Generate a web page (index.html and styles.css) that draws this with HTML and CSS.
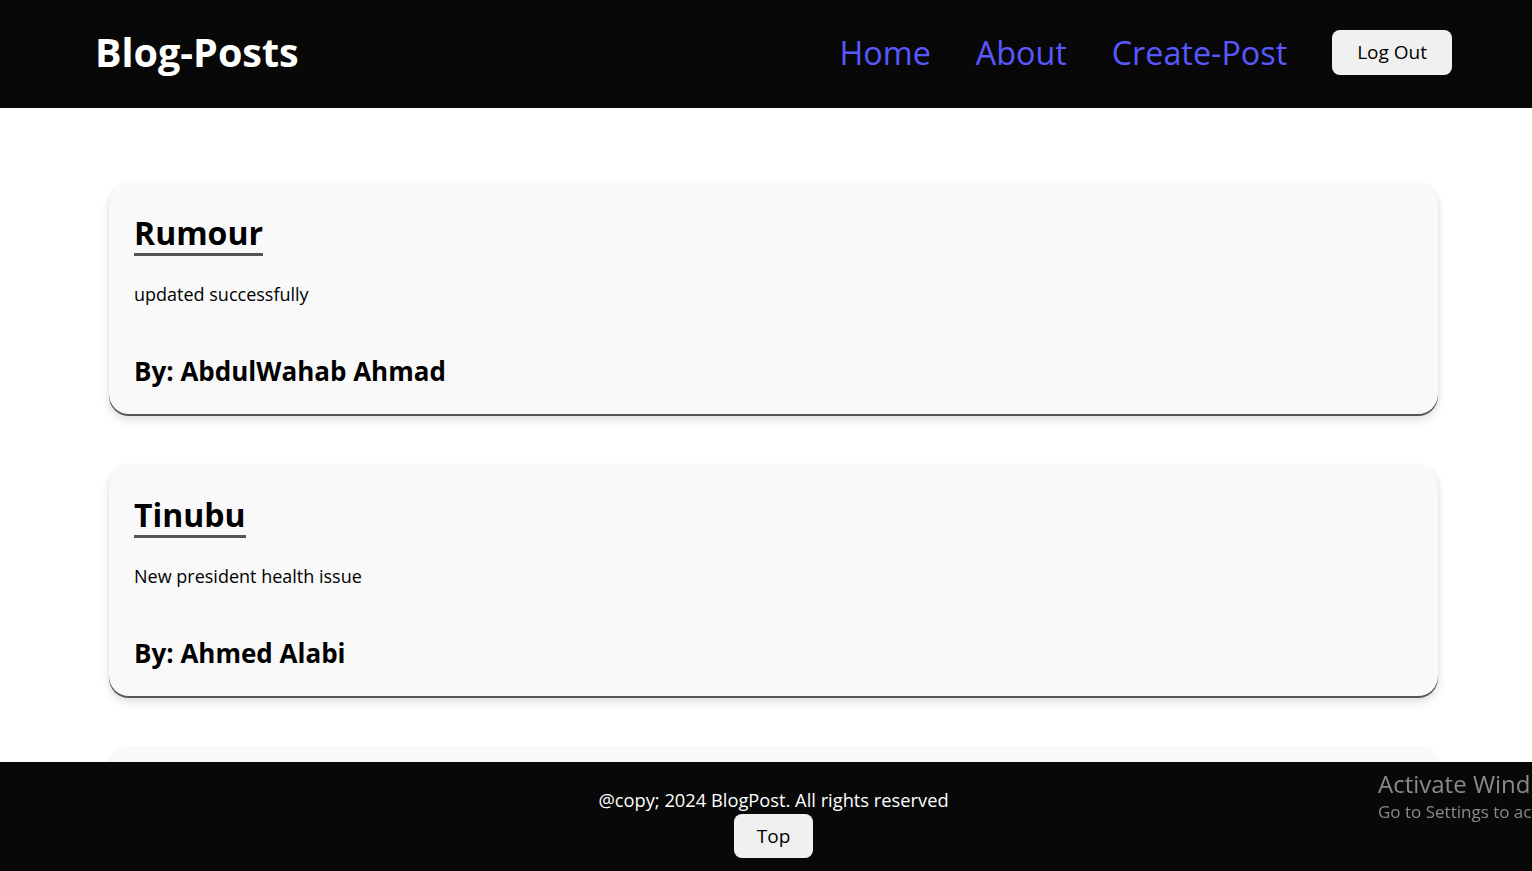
FILE: index.html
```html
<!DOCTYPE html>
<html lang="en">
<head>
<meta charset="utf-8">
<title>Blog-Posts</title>
<link rel="stylesheet" href="styles.css">
</head>
<body>
<header class="topbar">
  <h1 class="brand">Blog-Posts</h1>
  <nav class="nav">
    <a class="nav-link" href="#">Home</a>
    <a class="nav-link" href="#">About</a>
    <a class="nav-link" href="#">Create-Post</a>
    <button class="btn">Log Out</button>
  </nav>
</header>
<main class="posts">
  <article class="card">
    <h2 class="card-title">Rumour</h2>
    <p class="card-body">updated successfully</p>
    <h3 class="card-author">By: AbdulWahab Ahmad</h3>
  </article>
  <article class="card">
    <h2 class="card-title">Tinubu</h2>
    <p class="card-body">New president health issue</p>
    <h3 class="card-author">By: Ahmed Alabi</h3>
  </article>
  <article class="card">
    <h2 class="card-title">Post</h2>
    <p class="card-body">Another post</p>
    <h3 class="card-author">By: Author</h3>
  </article>
</main>
<footer class="footer">
  <p class="copy">@copy; 2024 BlogPost. All rights reserved</p>
  <button class="btn btn-top">Top</button>
</footer>
<div class="watermark">
  <div class="wm-title">Activate Windows</div>
  <div class="wm-sub">Go to Settings to activate Windows.</div>
</div>
</body>
</html>
```

FILE: styles.css
```css
* { box-sizing: border-box; }
html, body { margin: 0; padding: 0; }
body {
  font-family: "Open Sans", "Noto Sans", sans-serif;
  background: #ffffff;
  color: #000;
  overflow: hidden;
}
.topbar {
  height: 108px;
  background: #080808;
  display: flex;
  align-items: center;
  justify-content: space-between;
  padding: 0 80px 4px 95px;
}
.brand {
  margin: 0;
  color: #ffffff;
  font-size: 39.5px;
  font-weight: 700;
  letter-spacing: 0;
}
.nav {
  display: flex;
  align-items: center;
  gap: 45px;
}
.nav-link {
  color: #5858ff;
  text-decoration: none;
  font-size: 32.3px;
}
.btn {
  font-family: inherit;
  background: #f0f0f0;
  color: #000;
  border: none;
  border-radius: 8px;
  font-size: 19px;
  height: 45px;
  padding: 0 25px;
  cursor: pointer;
}
.posts {
  padding: 76px 94px 0 109px;
  display: flex;
  flex-direction: column;
  gap: 52px;
}
.card {
  background: #f9f9f9;
  border-radius: 20px;
  height: 230px;
  padding: 29px 25px 0;
  box-shadow: 0 2px 0 #555, 0 6px 10px rgba(0,0,0,0.12), 0 0 6px rgba(0,0,0,0.05);
  overflow: hidden;
}
.card-title {
  display: inline-block;
  margin: 0;
  font-size: 32px;
  font-weight: 700;
  line-height: 40px;
  border-bottom: 3px solid #555;
}
.card-body {
  margin: 26px 0 0;
  font-size: 18px;
  line-height: 24px;
}
.card-author {
  margin: 48px 0 0;
  font-size: 26px;
  font-weight: 700;
  line-height: 34px;
}
.footer {
  position: fixed;
  left: 0;
  right: 0;
  bottom: 0;
  height: 109px;
  background: #080808;
  display: flex;
  flex-direction: column;
  align-items: center;
  padding: 26px 0 0 15px;
}
.copy {
  margin: 0;
  color: #fff;
  font-size: 18.3px;
  line-height: 24px;
}
.btn-top {
  margin-top: 2px;
  height: 44px;
  padding: 0 23px;
}
.watermark {
  position: fixed;
  left: 1378px;
  top: 768px;
  white-space: nowrap;
  color: #8a8a8a;
}
.wm-title { font-size: 24px; line-height: 32px; }
.wm-sub { font-size: 17px; line-height: 24px; }
```
